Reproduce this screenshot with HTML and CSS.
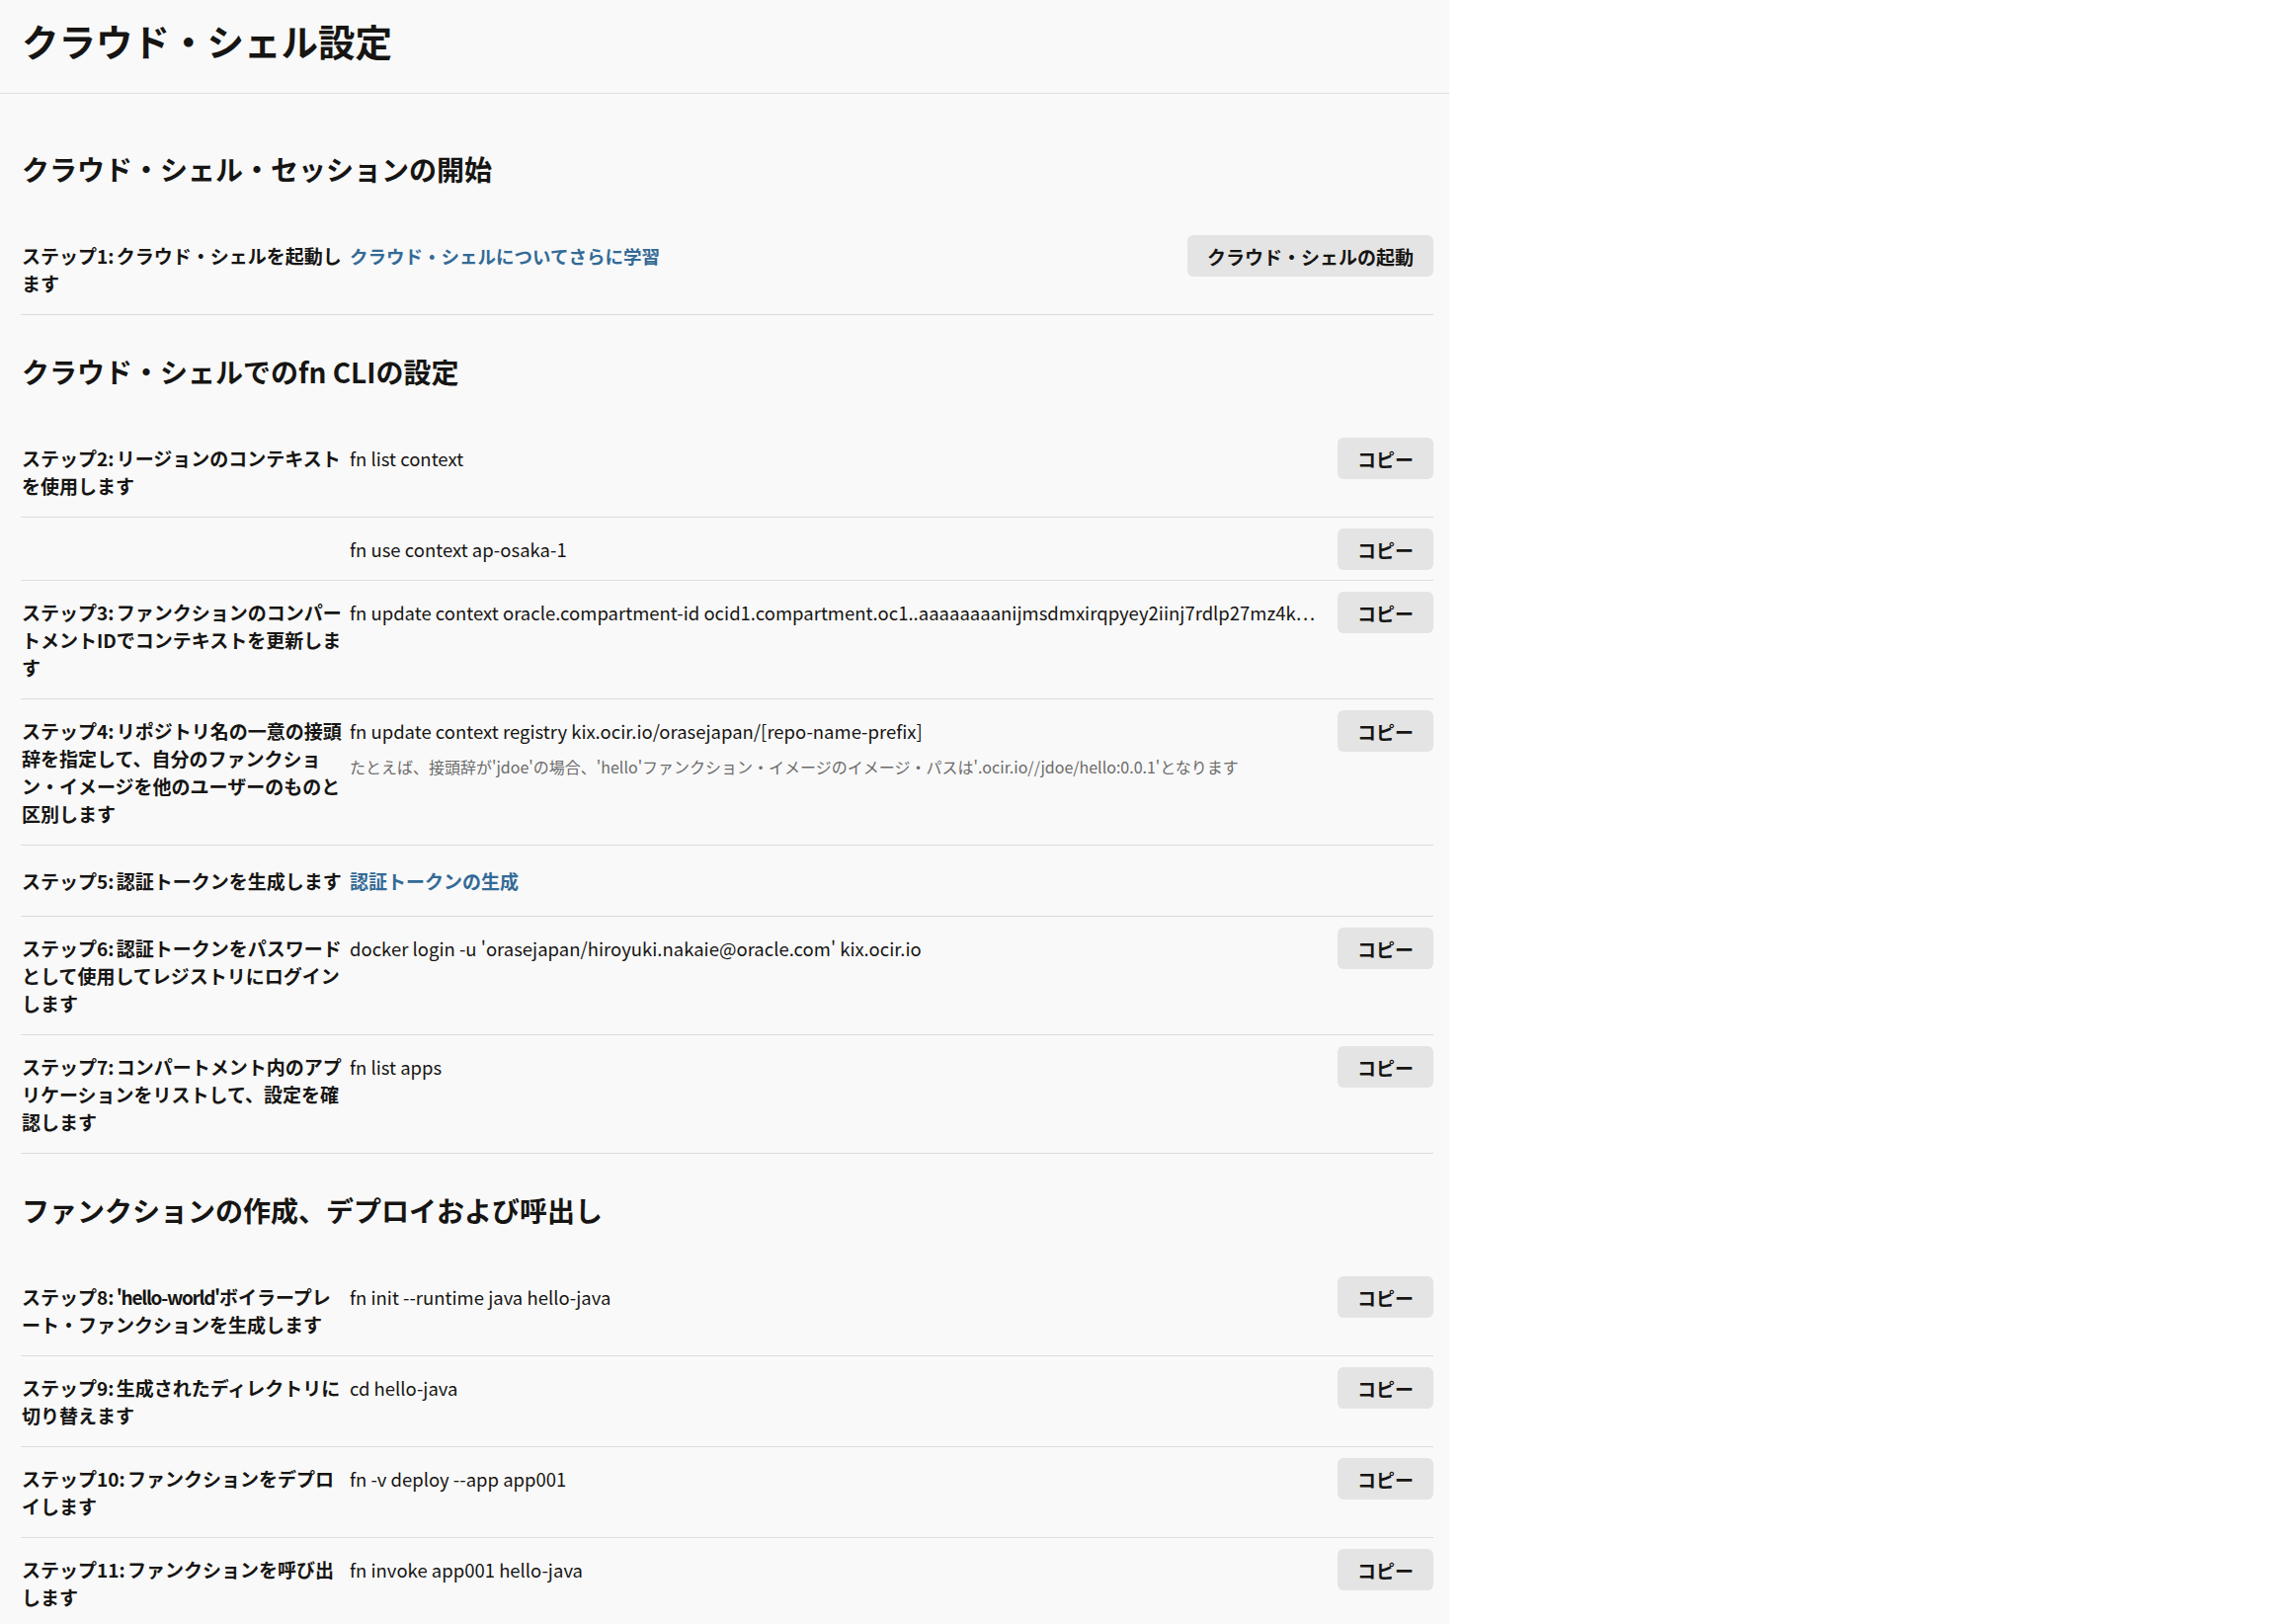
FILE: index.html
```html
<!DOCTYPE html>
<html lang="ja">
<head>
<meta charset="utf-8">
<title>クラウド・シェル設定</title>
<link rel="stylesheet" href="styles.css">
</head>
<body>
<div class="panel">
  <header class="header">
    <h1 class="title">クラウド・シェル設定</h1>
  </header>
  <main class="content">
    <section class="section">
      <h2 class="section-title">クラウド・シェル・セッションの開始</h2>
      <div class="row">
        <div class="label">ステップ1: クラウド・シェルを起動します</div>
        <div class="value"><a class="link" href="#">クラウド・シェルについてさらに学習</a></div>
        <button class="btn">クラウド・シェルの起動</button>
      </div>
    </section>

    <section class="section">
      <h2 class="section-title">クラウド・シェルでのfn CLIの設定</h2>
      <div class="row">
        <div class="label">ステップ2: リージョンのコンテキストを使用します</div>
        <div class="value"><div class="cmd">fn list context</div></div>
        <button class="btn">コピー</button>
      </div>
      <div class="row">
        <div class="label"></div>
        <div class="value"><div class="cmd">fn use context ap-osaka-1</div></div>
        <button class="btn">コピー</button>
      </div>
      <div class="row">
        <div class="label">ステップ3: ファンクションのコンパートメントIDでコンテキストを更新します</div>
        <div class="value"><div class="cmd" lang="en">fn update context oracle.compartment-id ocid1.compartment.oc1..aaaaaaaanijmsdmxirqpyey2iinj7rdlp27mz4kq7xq3pdbnrwhv6ma</div></div>
        <button class="btn">コピー</button>
      </div>
      <div class="row">
        <div class="label">ステップ4: リポジトリ名の一意の接頭辞を指定して、自分のファンクション・イメージを他のユーザーのものと区別します</div>
        <div class="value">
          <div class="cmd">fn update context registry kix.ocir.io/orasejapan/[repo-name-prefix]</div>
          <div class="hint">たとえば、接頭辞が'jdoe'の場合、'hello'ファンクション・イメージのイメージ・パスは'.ocir.io//jdoe/hello:0.0.1'となります</div>
        </div>
        <button class="btn">コピー</button>
      </div>
      <div class="row row-plain">
        <div class="label">ステップ5: 認証トークンを生成します</div>
        <div class="value"><a class="link" href="#">認証トークンの生成</a></div>
      </div>
      <div class="row">
        <div class="label">ステップ6: 認証トークンをパスワードとして使用してレジストリにログインします</div>
        <div class="value"><div class="cmd">docker login -u 'orasejapan/hiroyuki.nakaie@oracle.com' kix.ocir.io</div></div>
        <button class="btn">コピー</button>
      </div>
      <div class="row">
        <div class="label">ステップ7: コンパートメント内のアプリケーションをリストして、設定を確認します</div>
        <div class="value"><div class="cmd">fn list apps</div></div>
        <button class="btn">コピー</button>
      </div>
    </section>

    <section class="section">
      <h2 class="section-title">ファンクションの作成、デプロイおよび呼出し</h2>
      <div class="row">
        <div class="label">ステップ8: <span class="tight">'hello-world'</span>ボイラープレート・ファンクションを生成します</div>
        <div class="value"><div class="cmd">fn init --runtime java hello-java</div></div>
        <button class="btn">コピー</button>
      </div>
      <div class="row">
        <div class="label">ステップ9: 生成されたディレクトリに切り替えます</div>
        <div class="value"><div class="cmd">cd hello-java</div></div>
        <button class="btn">コピー</button>
      </div>
      <div class="row">
        <div class="label">ステップ10: ファンクションをデプロイします</div>
        <div class="value"><div class="cmd">fn -v deploy --app app001</div></div>
        <button class="btn">コピー</button>
      </div>
      <div class="row">
        <div class="label">ステップ11: ファンクションを呼び出します</div>
        <div class="value"><div class="cmd">fn invoke app001 hello-java</div></div>
        <button class="btn">コピー</button>
      </div>
    </section>
  </main>
</div>
</body>
</html>
```

FILE: styles.css
```css
html, body {
  margin: 0;
  padding: 0;
  background: #ffffff;
}

body {
  font-family: "Noto Sans CJK JP", "Noto Sans", sans-serif;
  color: #161513;
}

.panel {
  width: 1467px;
  min-height: 1644px;
  background: #f9f9f9;
}

.header {
  height: 94px;
  border-bottom: 1px solid #dedede;
  box-sizing: content-box;
}

.title {
  margin: 0;
  padding: 15px 0 0 22px;
  font-size: 37.5px;
  line-height: 52px;
  font-weight: 700;
}

.content {
  padding: 19px 16px 0 21px;
}

.section {
  padding-top: 39px;
}

.section-title {
  margin: 0 0 38px 1px;
  font-size: 28px;
  line-height: 36px;
  font-weight: 700;
}

.row {
  display: grid;
  grid-template-columns: 326px minmax(0, 1fr) auto;
  column-gap: 7px;
  align-items: start;
  padding: 11px 0 10px;
  border-bottom: 1px solid #dcdcdc;
}

.label {
  padding: 7px 0 7px 1px;
  font-size: 19px;
  line-height: 28px;
  font-weight: 700;
  word-spacing: -2px;
}

.tight {
  letter-spacing: -1.3px;
}

.value {
  padding: 7px 6px 7px 0;
  min-width: 0;
  font-size: 18.5px;
  line-height: 28px;
}

.row-plain .label,
.row-plain .value {
  padding-top: 11px;
  padding-bottom: 11px;
}

.row-plain .value {
  font-size: 19px;
}

.cmd {
  white-space: nowrap;
  overflow: hidden;
  text-overflow: ellipsis;
  font-variant-east-asian: proportional-width;
}

.hint {
  margin-top: 10px;
  font-size: 16px;
  line-height: 24px;
  color: #6b6b6b;
}

.link {
  color: #336a96;
  font-weight: 700;
  text-decoration: none;
}

.btn {
  height: 42px;
  padding: 0 20px;
  border: none;
  border-radius: 6px;
  background: #e4e4e4;
  color: #161513;
  font-family: "Noto Sans CJK JP", "Noto Sans", sans-serif;
  font-size: 19px;
  font-weight: 700;
  white-space: nowrap;
  cursor: pointer;
}
```
